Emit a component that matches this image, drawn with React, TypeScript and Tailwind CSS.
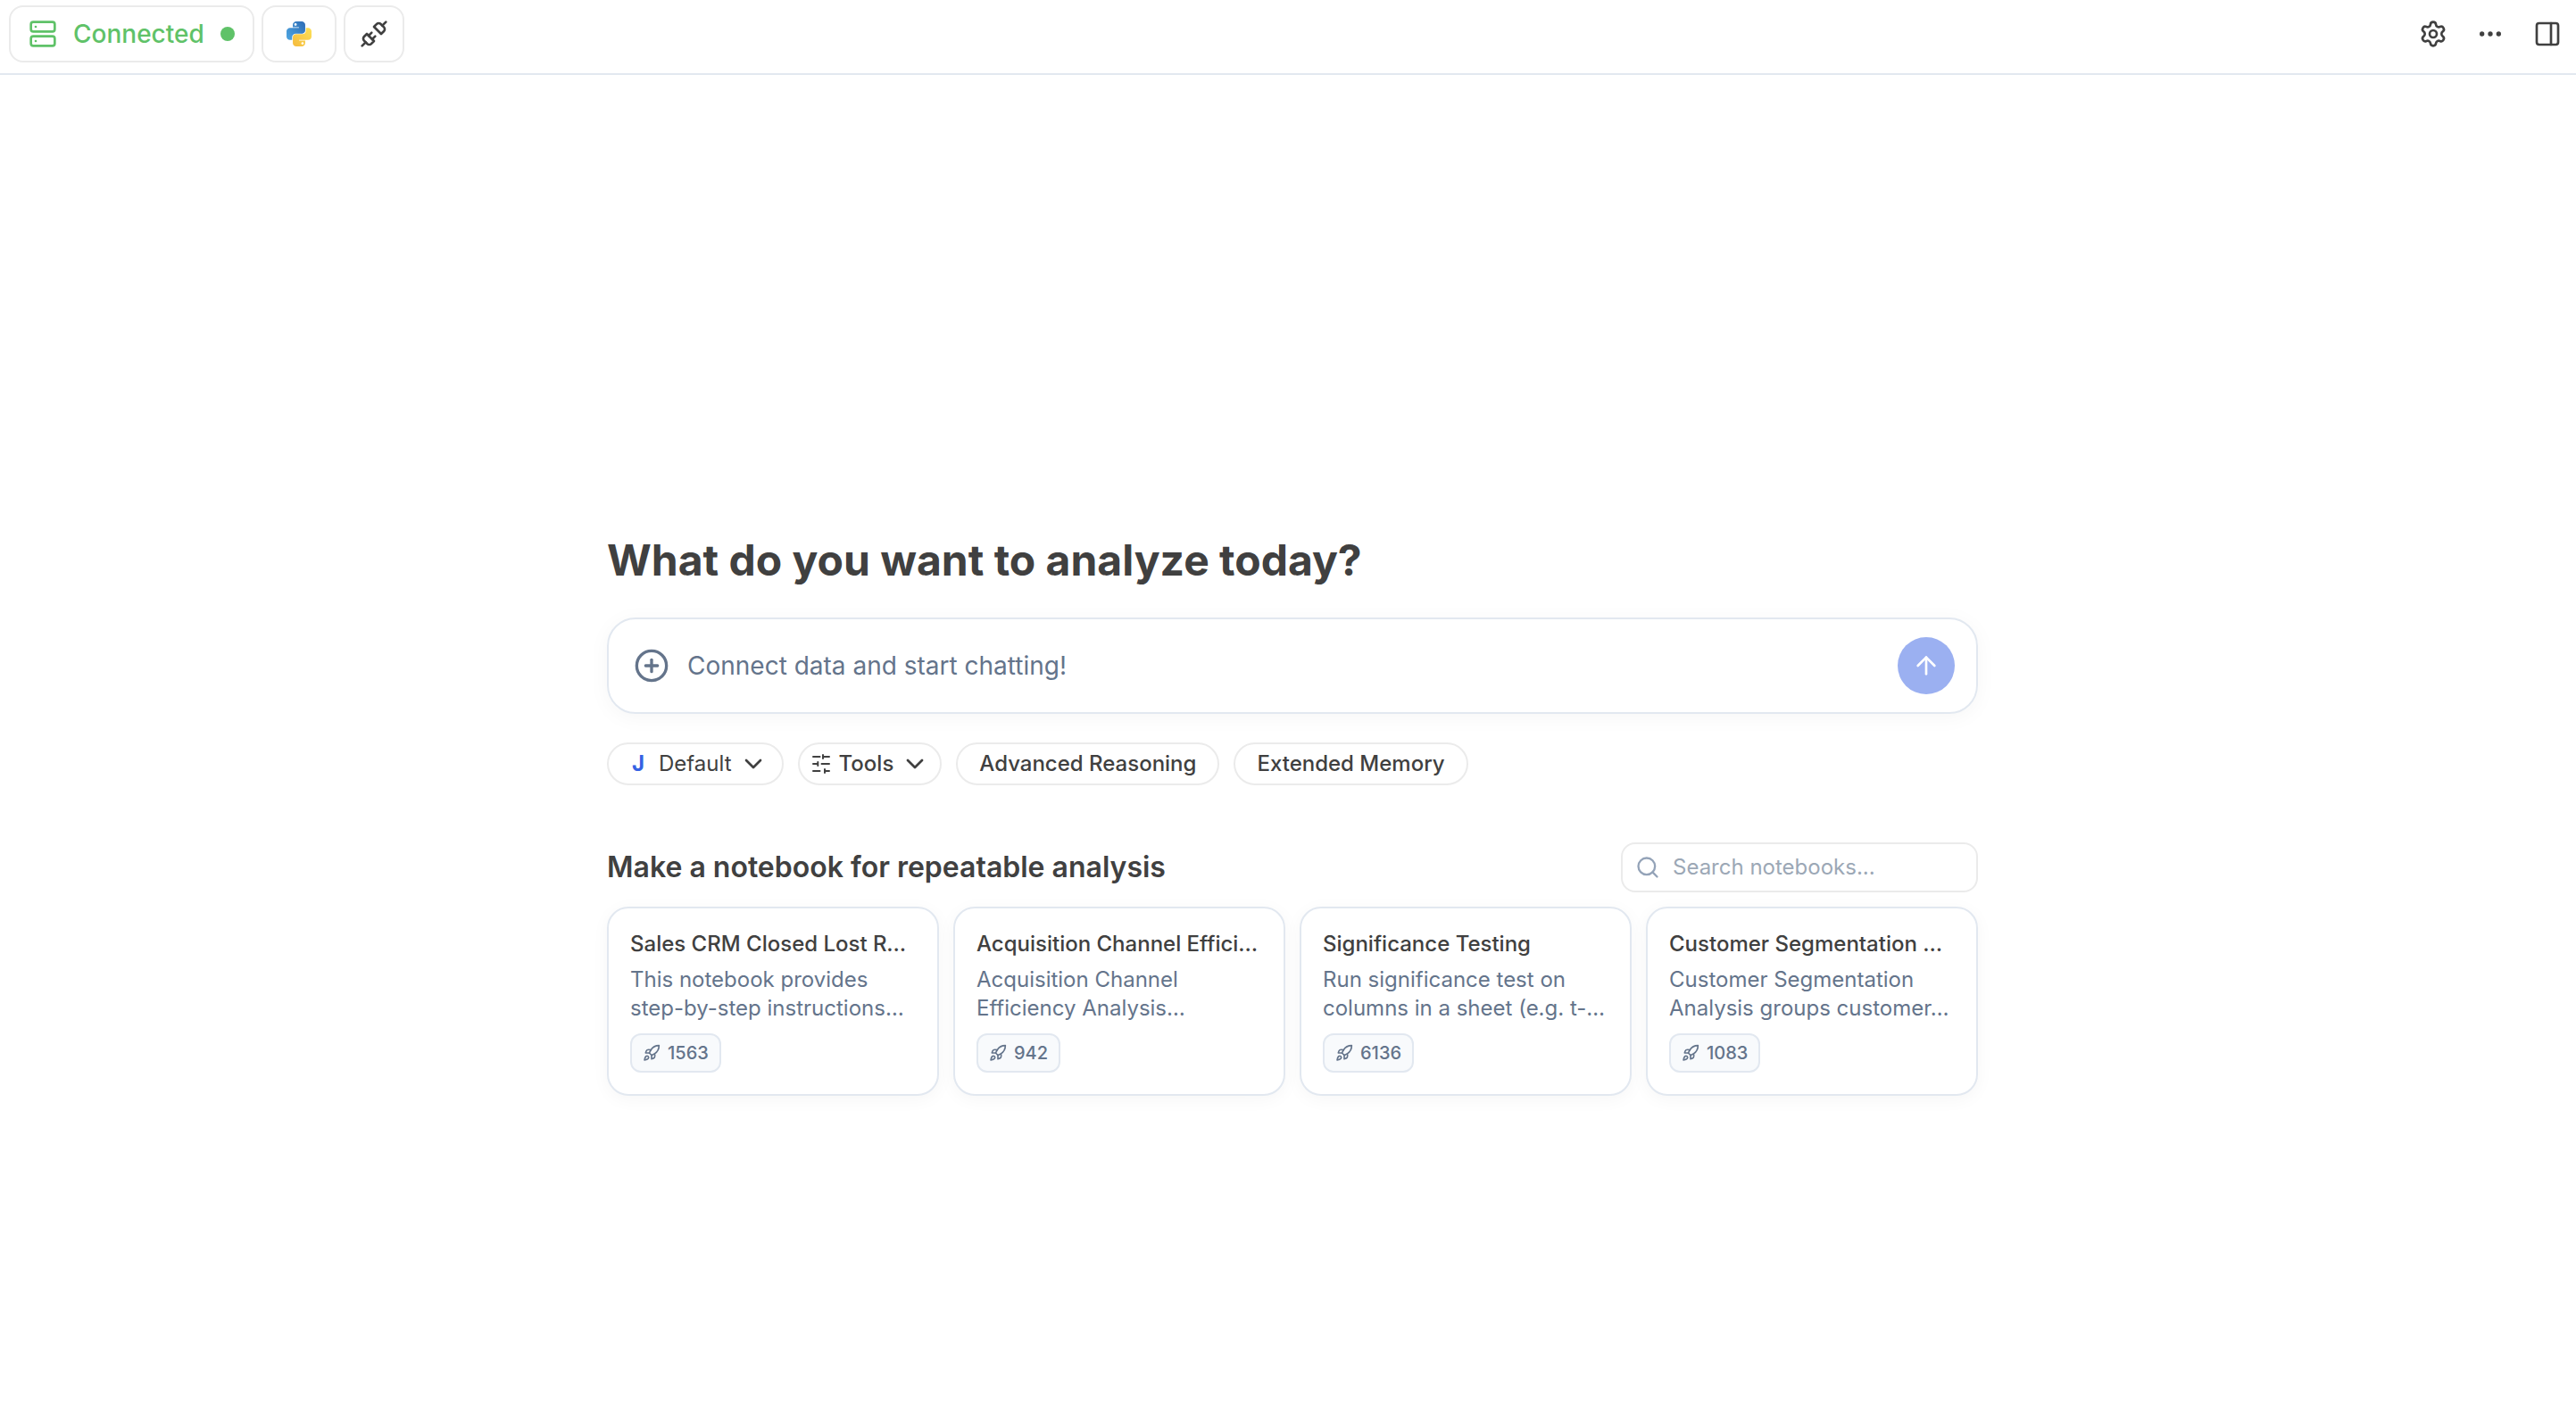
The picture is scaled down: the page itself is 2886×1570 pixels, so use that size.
import { useState } from 'react'
import { ArrowUp, ChevronDown, CirclePlus, Ellipsis, PanelRight, Rocket, Search, Server, Settings, Unplug } from 'lucide-react'

type Notebook = {
  title: string
  summary: string
  runs: number
}

const notebooks: Notebook[] = [
  {
    title: 'Sales CRM Closed Lost Reasons',
    summary: 'This notebook provides step-by-step instructions…',
    runs: 1563,
  },
  {
    title: 'Acquisition Channel Efficiency',
    summary: 'Acquisition Channel Efficiency Analysis…',
    runs: 942,
  },
  {
    title: 'Significance Testing',
    summary: 'Run significance test on columns in a sheet (e.g. t-…',
    runs: 6136,
  },
  {
    title: 'Customer Segmentation Analysis',
    summary: 'Customer Segmentation Analysis groups customer…',
    runs: 1083,
  },
]

function PythonLogo() {
  return (
    <svg viewBox="0 0 32 32" className="size-8" aria-hidden="true">
      <defs>
        <linearGradient id="py-blue" x1="3" y1="18" x2="22" y2="4" gradientUnits="userSpaceOnUse">
          <stop stopColor="#4a9fdc" />
          <stop offset="1" stopColor="#3070b8" />
        </linearGradient>
        <linearGradient id="py-yellow" x1="28" y1="12" x2="12" y2="28" gradientUnits="userSpaceOnUse">
          <stop stopColor="#fbdc54" />
          <stop offset="1" stopColor="#f6bf41" />
        </linearGradient>
      </defs>
      <path
        fillRule="evenodd"
        clipRule="evenodd"
        fill="url(#py-blue)"
        d="M13.0164 2C10.8193 2 9.03825 3.72453 9.03825 5.85185V8.51852H15.9235V9.25926H5.97814C3.78107 9.25926 2 10.9838 2 13.1111V18.8889C2 21.0162 3.78107 22.7407 5.97814 22.7407H8.27322V19.4815C8.27322 17.3542 10.0543 15.6296 12.2514 15.6296H19.5956C21.4547 15.6296 22.9617 14.1704 22.9617 12.3704V5.85185C22.9617 3.72453 21.1807 2 18.9836 2H13.0164ZM12.0984 6.74074C12.8589 6.74074 13.4754 6.14378 13.4754 5.40741C13.4754 4.67103 12.8589 4.07407 12.0984 4.07407C11.3378 4.07407 10.7213 4.67103 10.7213 5.40741C10.7213 6.14378 11.3378 6.74074 12.0984 6.74074Z"
      />
      <path
        fillRule="evenodd"
        clipRule="evenodd"
        fill="url(#py-yellow)"
        d="M18.9834 30C21.1805 30 22.9616 28.2755 22.9616 26.1482V23.4815L16.0763 23.4815L16.0763 22.7408L26.0217 22.7408C28.2188 22.7408 29.9998 21.0162 29.9998 18.8889V13.1111C29.9998 10.9838 28.2188 9.25928 26.0217 9.25928L23.7266 9.25928V12.5185C23.7266 14.6459 21.9455 16.3704 19.7485 16.3704L12.4042 16.3704C10.5451 16.3704 9.03809 17.8296 9.03809 19.6296L9.03809 26.1482C9.03809 28.2755 10.8192 30 13.0162 30H18.9834ZM19.9015 25.2593C19.1409 25.2593 18.5244 25.8562 18.5244 26.5926C18.5244 27.329 19.1409 27.9259 19.9015 27.9259C20.662 27.9259 21.2785 27.329 21.2785 26.5926C21.2785 25.8562 20.662 25.2593 19.9015 25.2593Z"
      />
    </svg>
  )
}

function ToolsIcon() {
  return (
    <svg viewBox="0 0 24 24" fill="none" stroke="currentColor" strokeWidth="2" strokeLinecap="round" className="size-6" aria-hidden="true">
      <path d="M3 4h7.5M14 4h7M14 2v4M3 12h5M8.3 10v4M12.5 12H21M3 20h7.5M16 20h5M16 18v4" />
    </svg>
  )
}

function NotebookCard({ notebook }: { notebook: Notebook }) {
  return (
    <article className="min-w-0 rounded-3xl border-2 border-[#e2e8f0] bg-white p-6 shadow-[0_4px_20px_rgba(0,0,0,0.04)]">
      <h3 className="truncate text-2xl font-medium">{notebook.title}</h3>
      <p className="mt-2 line-clamp-2 text-2xl text-[#64748b]">{notebook.summary}</p>
      <div className="mt-3 flex h-11 w-fit items-center gap-2 rounded-xl border-2 border-[#e2e8f0] bg-[#f8fafc] px-3 text-xl font-medium text-[#64748b]">
        <Rocket className="size-5" />
        {notebook.runs}
      </div>
    </article>
  )
}

export default function App() {
  const [message, setMessage] = useState('')
  const [query, setQuery] = useState('')

  const visible = notebooks.filter(n => n.title.toLowerCase().includes(query.toLowerCase()))

  return (
    <div className="flex min-h-screen flex-col bg-white font-['Inter',sans-serif] text-[#404040]">
      {/* Top bar */}
      <header className="flex items-center justify-between border-b-2 border-[#e2e8f0] pt-[6px] pr-4 pb-3 pl-[10px]">
        <div className="flex gap-2">
          <button className="flex h-16 items-center gap-[18px] rounded-2xl border-2 border-[#ebebeb] px-5 text-[28px] font-medium text-[#5fc268]">
            <Server className="size-8" />
            Connected
            <span className="size-4 rounded-full bg-[#5fc268]" />
          </button>
          <button aria-label="Python" className="flex h-16 w-[84px] items-center justify-center rounded-2xl border-2 border-[#ebebeb]">
            <PythonLogo />
          </button>
          <button aria-label="Connections" className="flex h-16 w-[68px] items-center justify-center rounded-2xl border-2 border-[#ebebeb]">
            <Unplug className="size-8" />
          </button>
        </div>
        <div className="flex gap-8">
          <button aria-label="Settings">
            <Settings className="size-8" />
          </button>
          <button aria-label="More">
            <Ellipsis className="size-8" />
          </button>
          <button aria-label="Toggle panel">
            <PanelRight className="size-8" />
          </button>
        </div>
      </header>

      <main className="flex flex-1 flex-col items-center justify-center pt-[174px] pl-[10px]">
        <div className="w-full max-w-[1536px]">
          <h1 className="text-5xl leading-14 font-bold">What do you want to analyze today?</h1>

          {/* Prompt */}
          <form
            onSubmit={e => e.preventDefault()}
            className="mt-9 flex h-[108px] items-center rounded-[32px] border-2 border-[#e2e8f0] pr-6 pl-7 shadow-[0_4px_24px_rgba(0,0,0,0.04)]"
          >
            <button type="button" aria-label="Add data" className="text-[#64748b]">
              <CirclePlus className="size-10" />
            </button>
            <input
              type="text"
              aria-label="Message"
              placeholder="Connect data and start chatting!"
              value={message}
              onChange={e => setMessage(e.target.value)}
              className="ml-5 flex-1 text-[28px] outline-none placeholder:text-[#64748b]"
            />
            <button type="submit" aria-label="Send" className="flex size-16 items-center justify-center rounded-full bg-[#9bb0f1] text-white">
              <ArrowUp className="size-8" />
            </button>
          </form>

          {/* Options */}
          <div className="mt-8 flex gap-4 text-2xl font-medium">
            <button className="flex h-12 items-center rounded-full border-2 border-[#ebebeb] pr-4 pl-[26px] font-normal">
              <span className="font-bold text-[#3662e3]">J</span>
              <span className="ml-4">Default</span>
              <ChevronDown className="ml-2 size-8" />
            </button>
            <button className="flex h-12 items-center rounded-full border-2 border-[#ebebeb] px-3">
              <ToolsIcon />
              <span className="ml-2">Tools</span>
              <ChevronDown className="ml-2 size-8" />
            </button>
            <button className="h-12 rounded-full border-2 border-[#ebebeb] px-6">Advanced Reasoning</button>
            <button className="h-12 rounded-full border-2 border-[#ebebeb] px-6">Extended Memory</button>
          </div>

          {/* Notebooks */}
          <section className="mt-16">
            <div className="flex items-center justify-between">
              <h2 className="text-[32px] font-semibold">Make a notebook for repeatable analysis</h2>
              <label className="flex h-14 w-[400px] items-center gap-[14px] rounded-2xl border-2 border-[#ebebeb] px-[14px] text-[#94a3b8]">
                <Search className="size-7" />
                <input
                  type="text"
                  aria-label="Search notebooks"
                  placeholder="Search notebooks..."
                  value={query}
                  onChange={e => setQuery(e.target.value)}
                  className="min-w-0 flex-1 text-2xl outline-none placeholder:text-[#9ca8b6]"
                />
              </label>
            </div>
            <div className="mt-4 grid grid-cols-4 gap-4">
              {visible.map(notebook => (
                <NotebookCard key={notebook.title} notebook={notebook} />
              ))}
            </div>
          </section>
        </div>
      </main>
    </div>
  )
}
